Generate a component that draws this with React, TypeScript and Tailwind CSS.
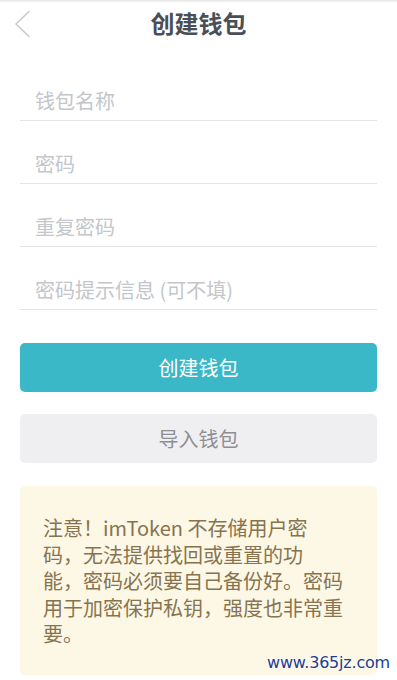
import React from 'react';

const font = { fontFamily: '"Noto Sans CJK SC", "Noto Sans", sans-serif' };

const fields = ['钱包名称', '密码', '重复密码', '密码提示信息 (可不填)'];

export default function App() {
  return (
    <div className="relative w-[397px] h-[680px] overflow-hidden bg-white" style={font}>
      <div className="h-[3px] bg-gradient-to-b from-[#e4e4e4] to-white" />
      {/* header */}
      <div className="relative h-[42px] flex items-center justify-center">
        <svg className="absolute left-[14px] top-[7px]" width="18" height="28" viewBox="0 0 18 28" fill="none">
          <path d="M15 1.5 L2 14 L15 26.5" stroke="#c9c9c9" strokeWidth="1.6" strokeLinecap="round" strokeLinejoin="round" />
        </svg>
        <h1 className="text-[24px] font-bold text-[#4a4f57] leading-none -mt-[3px]">创建钱包</h1>
      </div>

      <div className="px-5 mt-[13px]">
        {fields.map(f => (
          <div key={f} className="h-[63px] flex items-end border-b border-[#e4e5e7]">
            <span className="pl-[15px] pb-[9px] text-[20px] leading-[20px] text-[#c3c6ca]">{f}</span>
          </div>
        ))}

        <button className="mt-[33px] w-full h-[49px] rounded-[5px] bg-[#3ab8c8] text-white text-[20px] flex items-center justify-center">
          创建钱包
        </button>
        <button className="mt-[22px] w-full h-[49px] rounded-[5px] bg-[#efeff2] text-[#8e8e93] text-[20px] flex items-center justify-center">
          导入钱包
        </button>

        <div className="mt-[23px] rounded-[5px] bg-[#fdf7e6] pl-[23px] pr-[10px] pt-[29px] pb-[27px] text-[20px] leading-[26.5px] text-[#87744f] whitespace-nowrap">
          注意！imToken 不存储用户密<br />
          码，无法提供找回或重置的功<br />
          能，密码必须要自己备份好。密码<br />
          用于加密保护私钥，强度也非常重<br />
          要。
        </div>
      </div>

      <div
        className="absolute right-[7px] bottom-[9px] text-[16px] leading-none text-[#223d8c] tracking-[-0.2px]"
        style={{ fontFamily: '"DejaVu Sans", sans-serif', textShadow: '0 0 2px #fff, 0 0 2px #fff' }}
      >
        www.365jz.com
      </div>
    </div>
  );
}
